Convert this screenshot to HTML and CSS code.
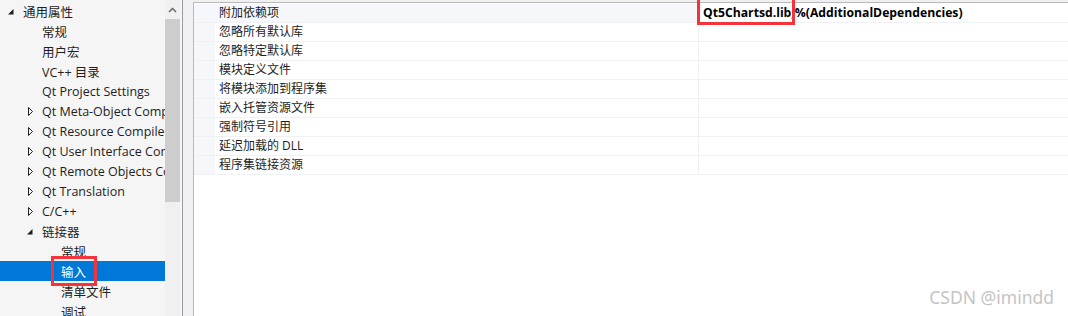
FILE: index.html
```html
<!DOCTYPE html>
<html lang="zh-CN">
<head>
    <meta charset="utf-8">
    <link rel="stylesheet" href="styles.css">
</head>
<body>
    <div class="page">
        <div class="tree-pane">
            <ul class="tree">
                <li class="node lv0"><span class="arrow"><svg width="19" height="20" viewBox="0 0 19 20"><path d="M4 13.5 L9.5 13.5 L9.5 8 Z" fill="#1e1e1e"/></svg></span>通用属性</li>
                <li class="node lv1"><span class="arrow"></span>常规</li>
                <li class="node lv1"><span class="arrow"></span>用户宏</li>
                <li class="node lv1"><span class="arrow"></span>VC++ 目录</li>
                <li class="node lv1"><span class="arrow"></span>Qt Project Settings</li>
                <li class="node lv1"><span class="arrow"><svg width="19" height="20" viewBox="0 0 19 20"><path d="M5.5 6.5 L9.5 10.5 L5.5 14.5 Z" fill="none" stroke="#1e1e1e" stroke-width="1"/></svg></span>Qt Meta-Object Compiler</li>
                <li class="node lv1"><span class="arrow"><svg width="19" height="20" viewBox="0 0 19 20"><path d="M5.5 6.5 L9.5 10.5 L5.5 14.5 Z" fill="none" stroke="#1e1e1e" stroke-width="1"/></svg></span>Qt Resource Compiler</li>
                <li class="node lv1"><span class="arrow"><svg width="19" height="20" viewBox="0 0 19 20"><path d="M5.5 6.5 L9.5 10.5 L5.5 14.5 Z" fill="none" stroke="#1e1e1e" stroke-width="1"/></svg></span>Qt User Interface Compiler</li>
                <li class="node lv1"><span class="arrow"><svg width="19" height="20" viewBox="0 0 19 20"><path d="M5.5 6.5 L9.5 10.5 L5.5 14.5 Z" fill="none" stroke="#1e1e1e" stroke-width="1"/></svg></span>Qt Remote Objects Compiler</li>
                <li class="node lv1"><span class="arrow"><svg width="19" height="20" viewBox="0 0 19 20"><path d="M5.5 6.5 L9.5 10.5 L5.5 14.5 Z" fill="none" stroke="#1e1e1e" stroke-width="1"/></svg></span>Qt Translation</li>
                <li class="node lv1"><span class="arrow"><svg width="19" height="20" viewBox="0 0 19 20"><path d="M5.5 6.5 L9.5 10.5 L5.5 14.5 Z" fill="none" stroke="#1e1e1e" stroke-width="1"/></svg></span>C/C++</li>
                <li class="node lv1"><span class="arrow"><svg width="19" height="20" viewBox="0 0 19 20"><path d="M4 13.5 L9.5 13.5 L9.5 8 Z" fill="#1e1e1e"/></svg></span>链接器</li>
                <li class="node lv2"><span class="arrow"></span>常规</li>
                <li class="node lv2 selected"><span class="arrow"></span><span class="mark mark-tree">输入</span></li>
                <li class="node lv2"><span class="arrow"></span>清单文件</li>
                <li class="node lv2"><span class="arrow"></span>调试</li>
            </ul>
            <div class="scrollbar">
                <div class="sb-up">
                    <svg width="9" height="6" viewBox="0 0 9 6"><path d="M1 5 L4.5 1.5 L8 5" fill="none" stroke="#606060" stroke-width="1.4"/></svg>
                </div>
                <div class="sb-thumb"></div>
            </div>
        </div>

        <div class="grid-pane">
            <div class="grid">
                <div class="row current"><div class="gutter"></div><div class="name">附加依赖项</div><div class="value"><span class="mark mark-value">Qt5Chartsd.lib</span>;%(AdditionalDependencies)</div></div>
                <div class="row"><div class="gutter"></div><div class="name">忽略所有默认库</div><div class="value"></div></div>
                <div class="row"><div class="gutter"></div><div class="name">忽略特定默认库</div><div class="value"></div></div>
                <div class="row"><div class="gutter"></div><div class="name">模块定义文件</div><div class="value"></div></div>
                <div class="row"><div class="gutter"></div><div class="name">将模块添加到程序集</div><div class="value"></div></div>
                <div class="row"><div class="gutter"></div><div class="name">嵌入托管资源文件</div><div class="value"></div></div>
                <div class="row"><div class="gutter"></div><div class="name">强制符号引用</div><div class="value"></div></div>
                <div class="row"><div class="gutter"></div><div class="name">延迟加载的 DLL</div><div class="value"></div></div>
                <div class="row"><div class="gutter"></div><div class="name">程序集链接资源</div><div class="value"></div></div>
            </div>
            <div class="watermark">CSDN @imindd</div>
        </div>
    </div>
</body>
</html>
```

FILE: styles.css
```css
body {
    margin: 0;
    background: #f0f0f0;
    font-family: "Open Sans", "Noto Sans CJK SC", sans-serif;
    font-size: 12.5px;
    color: #1e1e1e;
    overflow: hidden;
}

.page {
    display: flex;
    height: 316px;
}

/* left tree */
.tree-pane {
    display: flex;
    width: 182px;
    height: 316px;
    background: #f5f5f5;
    border-right: 1px solid #9a9aa8;
    overflow: hidden;
}

.tree {
    list-style: none;
    margin: 0;
    padding: 1px 0 0;
    width: 165px;
    flex: none;
    overflow: hidden;
}

.node {
    display: flex;
    align-items: center;
    height: 20px;
    white-space: nowrap;
}

.lv0 { padding-left: 4px; }
.lv1 { padding-left: 23px; }
.lv2 { padding-left: 42px; }

.arrow {
    flex: none;
    width: 19px;
    height: 20px;
}

.arrow svg {
    display: block;
}

.node.selected {
    background: #0078d7;
    color: #fff;
}

.mark {
    position: relative;
}

.mark::after {
    content: '';
    position: absolute;
    border: 3px solid #f5333a;
    pointer-events: none;
}

.mark-tree::after {
    left: -10px;
    right: -11px;
    top: -6px;
    bottom: -5px;
}

.mark-value::after {
    left: -6px;
    right: -4px;
    top: -7px;
    bottom: -4px;
}

.scrollbar {
    flex: none;
    width: 15px;
    background: #f0f0f0;
}

.sb-up {
    height: 19px;
    display: flex;
    align-items: center;
    justify-content: center;
}

.sb-thumb {
    height: 183px;
    background: #cdcdcd;
}

/* right property grid */
.grid-pane {
    flex: 1;
    margin: 2px 0 0 10px;
    background: #fff;
    border-top: 1px solid #b9b9b9;
    border-left: 1px solid #b9b9b9;
    position: relative;
    padding-top: 1px;
}

.grid {
    display: flex;
    flex-direction: column;
}

.row {
    display: flex;
    height: 18px;
    border-bottom: 1px solid #f0f1f5;
    line-height: 18px;
}

.gutter {
    width: 21px;
    flex: none;
    background: #f5f7fb;
}

.name {
    width: 484px;
    flex: none;
    padding-left: 4px;
    box-sizing: border-box;
    border-right: 1px solid #f0f1f5;
    font-size: 12px;
}

.row.current .name {
    background: #f5f7fb;
}

.value {
    flex: 1;
    padding-left: 4px;
    font-size: 12.2px;
    font-weight: bold;
    color: #000;
    white-space: nowrap;
}

.watermark {
    position: absolute;
    right: 14px;
    bottom: 7px;
    font-family: "Noto Sans", sans-serif;
    font-size: 17.5px;
    color: #c4c4c4;
}
```
